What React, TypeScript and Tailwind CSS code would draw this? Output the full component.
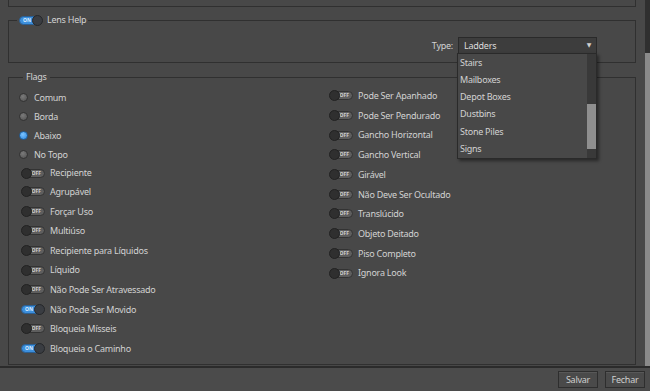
import React from "react";

function Toggle({ on }: { on: boolean }) {
  return on ? (
    <div className="relative w-[24px] h-[11px] shrink-0">
      <div className="absolute left-0 top-[1px] w-[22px] h-[9px] rounded-full bg-[#3d8fdc] border border-[#2a5f94] flex items-center pl-[3px]">
        <span className="text-[5px] leading-none font-bold text-[#dbeeff] tracking-normal">ON</span>
      </div>
      <div className="absolute right-0 top-0 w-[11px] h-[11px] rounded-full bg-[#3a3d42] border border-[#25272a]" />
    </div>
  ) : (
    <div className="relative w-[24px] h-[11px] shrink-0">
      <div className="absolute right-0 top-[1px] w-[22px] h-[9px] rounded-full bg-[#5e5e5e] border border-[#333] flex items-center justify-end pr-[3px]">
        <span className="text-[5px] leading-none font-bold text-[#cfcfcf] tracking-normal">OFF</span>
      </div>
      <div className="absolute left-0 top-0 w-[11px] h-[11px] rounded-full bg-[#2f2f2f] border border-[#222]" />
    </div>
  );
}

function Radio({ on }: { on: boolean }) {
  return (
    <div
      className={
        "w-[9px] h-[9px] rounded-full shrink-0 border " +
        (on
          ? "bg-[radial-gradient(circle_at_40%_35%,#7cc4ff,#2a86e0)] border-[#1f5d9a]"
          : "bg-[radial-gradient(circle_at_40%_35%,#7a7a7a,#505050)] border-[#333]")
      }
    />
  );
}

function Row({ children, label, h }: { children: React.ReactNode; label: string; h: string }) {
  return (
    <div className={h + " flex items-center gap-[5px]"}>
      {children}
      <span>{label}</span>
    </div>
  );
}

export default function App() {
  const radios: [string, boolean][] = [
    ["Comum", false],
    ["Borda", false],
    ["Abaixo", true],
    ["No Topo", false],
  ];
  const leftToggles: [string, boolean][] = [
    ["Recipiente", false],
    ["Agrupável", false],
    ["Forçar Uso", false],
    ["Multiúso", false],
    ["Recipiente para Líquidos", false],
    ["Líquido", false],
    ["Não Pode Ser Atravessado", false],
    ["Não Pode Ser Movido", true],
    ["Bloqueia Mísseis", false],
    ["Bloqueia o Caminho", true],
  ];
  const rightToggles = [
    "Pode Ser Apanhado",
    "Pode Ser Pendurado",
    "Gancho Horizontal",
    "Gancho Vertical",
    "Girável",
    "Não Deve Ser Ocultado",
    "Translúcido",
    "Objeto Deitado",
    "Piso Completo",
    "Ignora Look",
  ];
  const items = ["Stairs", "Mailboxes", "Depot Boxes", "Dustbins", "Stone Piles", "Signs"];

  return (
    <div
      className="w-[650px] h-[391px] bg-[#484848] text-[#d2d2d2] text-[9px] tracking-[-0.25px] flex flex-col overflow-hidden"
      style={{ fontFamily: '"Noto Sans", "DejaVu Sans", sans-serif' }}
    >
      <div className="h-[366px] flex">
        <div className="flex-1 pl-[8px] pr-[9px] flex flex-col">
          {/* previous group bottom */}
          <div className="h-[7px] border-x border-b border-[#303030]" />

          {/* Lens Help */}
          <fieldset className="mt-[7px] h-[49px] border border-[#303030] px-[8px]">
            <legend className="px-[2px] flex items-center gap-[4px] h-[12px]">
              <Toggle on={true} />
              <span>Lens Help</span>
            </legend>
            <div className="flex justify-end items-center gap-[5px] pr-[30px] mt-[11px]">
              <span>Type:</span>
              <div className="relative w-[139px] h-[17px] bg-[#3d3d3d] border border-[#2a2a2a] flex items-center pl-[5px] pr-[5px] justify-between">
                <span className="text-[#dcdcdc]">Ladders</span>
                <span className="text-[6px] text-[#d0d0d0]">▼</span>
                {/* dropdown popup */}
                <div className="absolute left-[-2px] top-[15px] z-10 w-[140px] h-[106px] bg-[#484848] border border-[#2a2a2a] shadow-[2px_2px_3px_rgba(0,0,0,0.45)] flex">
                  <div className="flex-1 pl-[2px]">
                    {items.map((t) => (
                      <div key={t} className="h-[17.2px] flex items-center">
                        {t}
                      </div>
                    ))}
                  </div>
                  <div className="w-[9px] bg-[#393939] flex flex-col pt-[50px] pb-[9px]">
                    <div className="flex-1 bg-[#8f8f8f]" />
                  </div>
                </div>
              </div>
            </div>
          </fieldset>

          {/* Flags */}
          <fieldset className="mt-[8px] h-[294px] border border-[#303030] pl-[10px] pr-[8px]">
            <legend className="px-[3px] ml-[4px] h-[12px] flex items-center">Flags</legend>
            <div className="flex pt-[5px]">
              <div className="w-[310px] flex flex-col">
                {radios.map(([l, on]) => (
                  <Row key={l} label={l} h="h-[19px]">
                    <div className="w-[10px] flex justify-start">
                      <Radio on={on} />
                    </div>
                  </Row>
                ))}
                {leftToggles.map(([l, on], i) => (
                  <Row key={l} label={l} h={i === 0 ? "h-[18px]" : "h-[19.6px]"}>
                    <div className="pl-[2px]">
                      <Toggle on={on} />
                    </div>
                  </Row>
                ))}
              </div>
              <div className="flex flex-col -mt-[2px]">
                {rightToggles.map((l) => (
                  <Row key={l} label={l} h="h-[19.7px]">
                    <Toggle on={false} />
                  </Row>
                ))}
              </div>
            </div>
          </fieldset>
        </div>
        {/* outer scrollbar */}
        <div className="w-[5px] bg-[#2f2f2f] flex flex-col pt-[53px]">
          <div className="flex-1 bg-[#8a8a8a]" />
        </div>
      </div>
      <div className="h-[2px] bg-[#2b2b2b]" />
      <div className="flex-1 bg-[#4b4b4b] flex justify-end items-center gap-[7px] pr-[5px]">
        {["Salvar", "Fechar"].map((b) => (
          <div
            key={b}
            className="w-[40px] h-[17px] bg-[#4a4a4a] border border-[#2e2e2e] shadow-[inset_0_1px_0_rgba(255,255,255,0.08)] flex items-center justify-center text-[#cfcfcf]"
          >
            {b}
          </div>
        ))}
      </div>
    </div>
  );
}
